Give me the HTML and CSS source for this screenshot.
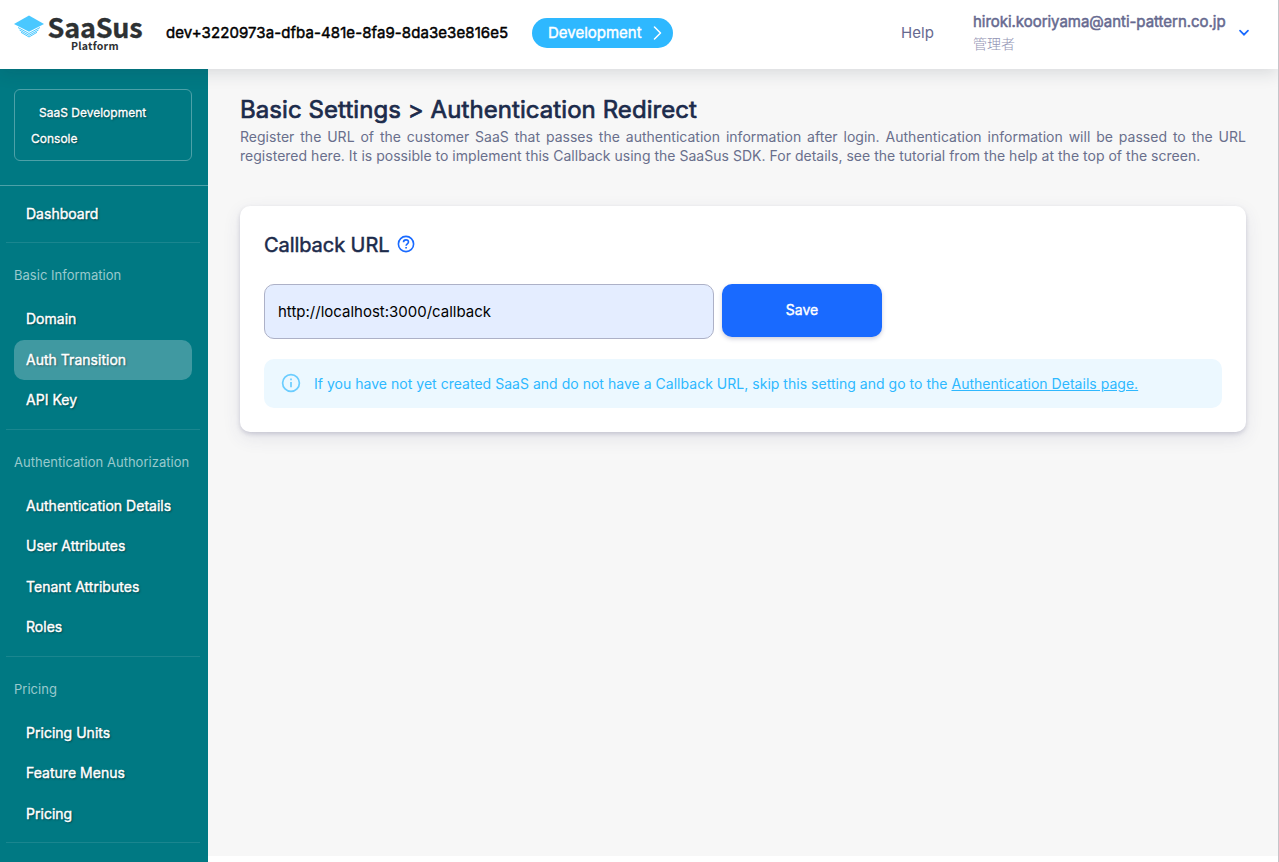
FILE: index.html
```html
<!DOCTYPE html>
<html lang="en">
<head>
<meta charset="utf-8">
<title>SaaSus Platform</title>
<link rel="stylesheet" href="styles.css">
</head>
<body>
<div class="page">
  <header class="header">
    <div class="logo">
      <svg class="logo-mark" width="30" height="24" viewBox="0 0 30 24">
        <path d="M0 9 15 .500l15 8.500-15 7.800z" fill="#4ac8ff"/>
        <path d="M4 12.500 15 18.500l11-6M5.500 15 15 20.300l9.500-5.300" fill="none" stroke="#4ac8ff" stroke-width="1"/>
        <path d="M7 17.300 15 22l8-4.700" fill="none" stroke="#4ac8ff" stroke-width="1"/>
      </svg>
      <div class="logo-text"><span class="logo-name">SaaSus</span><span class="logo-sub">Platform</span></div>
    </div>
    <div class="tenant">dev+3220973a-dfba-481e-8fa9-8da3e3e816e5</div>
    <div class="env"><span>Development</span>
      <svg width="9" height="14" viewBox="0 0 9 14"><path d="M1.500 1 7.500 7l-6 6" fill="none" stroke="#fff" stroke-width="1.500" stroke-linecap="round" stroke-linejoin="round"/></svg>
    </div>
    <div class="help">Help</div>
    <div class="user"><span class="mail">hiroki.kooriyama@anti-pattern.co.jp</span><span class="role">管理者</span></div>
    <svg class="caret" width="12" height="8" viewBox="0 0 12 8"><path d="M2 1.700 6 5.700l4-4" fill="none" stroke="#196aff" stroke-width="1.700" stroke-linecap="round"/></svg>
  </header>
  <div class="body">
    <nav class="sidebar">
      <div class="console-wrap"><div class="console">SaaS Development Console</div></div>
      <div class="group first"><a class="item">Dashboard</a></div>
      <div class="group">
        <div class="label">Basic Information</div>
        <a class="item">Domain</a>
        <a class="item active">Auth Transition</a>
        <a class="item">API Key</a>
      </div>
      <div class="group">
        <div class="label">Authentication Authorization</div>
        <a class="item">Authentication Details</a>
        <a class="item">User Attributes</a>
        <a class="item">Tenant Attributes</a>
        <a class="item">Roles</a>
      </div>
      <div class="group">
        <div class="label">Pricing</div>
        <a class="item">Pricing Units</a>
        <a class="item">Feature Menus</a>
        <a class="item">Pricing</a>
      </div>
    </nav>
    <main class="main">
      <h1 class="title">Basic Settings &gt; Authentication Redirect</h1>
      <p class="lead">Register the URL of the customer SaaS that passes the authentication information after login. Authentication information will be passed to the URL registered here. It is possible to implement this Callback using the SaaSus SDK. For details, see the tutorial from the help at the top of the screen.</p>
      <section class="card">
        <h2 class="card-title">Callback URL
          <svg class="hint" width="18" height="18" viewBox="0 0 18 18" fill="none" stroke="#196aff"><circle cx="9" cy="9" r="7.600" stroke-width="1.600"/><path d="M6.500 7.200c0-1.400 1.100-2.300 2.500-2.300s2.500.9 2.500 2.200c0 1.800-2.400 1.900-2.400 3.700" stroke-width="1.600"/><path d="M9.100 11.900v1.700" stroke-width="1.700"/></svg>
        </h2>
        <div class="form">
          <input class="field" type="text" value="http://localhost:3000/callback">
          <button class="save">Save</button>
        </div>
        <div class="notice">
          <svg class="info" width="20" height="20" viewBox="0 0 20 20" fill="none" stroke="#6bcdff"><circle cx="10" cy="10" r="8.400" stroke-width="1.700"/><path d="M10 9v5.200M10 5.500v1.700" stroke-width="1.700"/></svg>
          <span>If you have not yet created SaaS and do not have a Callback URL, skip this setting and go to the <a class="link">Authentication Details page.</a></span>
        </div>
      </section>
    </main>
  </div>
</div>
</body>
</html>
```
FILE: styles.css
```css
* { box-sizing: border-box; }
body { margin: 0; background: #fff; font-family: Inter, "Noto Sans CJK JP", sans-serif; font-size: 14px; }
.page { height: 862px; overflow: hidden; display: flex; flex-direction: column; border-right: 1px solid #c5c5ca; }

.header { position: relative; z-index: 1; height: 69px; flex: none; display: flex; align-items: center; padding: 0 28px 3px 14px; background: #fff; box-shadow: 0 4px 16px rgba(30, 40, 60, .14); }
.logo { display: flex; width: 152px; height: 38px; gap: 3.500px; }
.logo-mark { margin-top: 1px; }
.logo-text { display: flex; flex-direction: column; width: 95px; font-family: "Noto Sans CJK JP", sans-serif; color: #2d3133; font-weight: 700; }
.logo-name { font-size: 27px; line-height: 25px; letter-spacing: -.2px; -webkit-text-stroke: .3px; }
.logo-sub { font-size: 10.500px; line-height: 14px; padding-left: 23.500px; letter-spacing: .25px; }
.tenant { width: 366px; font-size: 15px; letter-spacing: .085px; color: #000; -webkit-text-stroke: .45px; padding-bottom: 1px; }
.env { display: flex; align-items: center; justify-content: space-between; width: 141px; height: 30px; padding: 0 11px 1px 16px; border-radius: 15px; background: #2eb8ff; color: #fff; font-size: 15px; -webkit-text-stroke: .4px; }
.help { margin-left: auto; width: 72px; padding-bottom: 1px; font-size: 15px; letter-spacing: .1px; color: #66698f; }
.user { display: flex; flex-direction: column; width: 265px; color: #66698f; }
.mail { font-size: 15px; line-height: 22px; letter-spacing: -.03px; -webkit-text-stroke: .5px; }
.role { font-size: 14px; line-height: 22px; color: #9294b4; font-weight: 300; }
.caret { flex: none; }

.body { flex: 1; min-height: 0; display: flex; }
.sidebar { width: 208px; flex: none; background: #007983; color: #fff; }
.console-wrap { height: 117px; padding: 20px 16px 0 14px; border-bottom: 1px solid #4da1a8; }
.console { height: 72px; padding: 10px 16px; border: 1px solid #4da1a8; border-radius: 6px; font-size: 12px; line-height: 26px; text-indent: 8px; text-shadow: 1px 1px 2px rgba(0, 0, 0, .5); -webkit-text-stroke: .3px; }
.group { margin: 0 8px 0 6px; padding: 0 8px 8.400px; border-bottom: 1px solid #1a868f; }
.group.first { padding: 8px 8px; }
.label { height: 56px; padding-top: 24px; font-size: 13px; line-height: 16px; letter-spacing: .02px; color: #99c9cd; white-space: nowrap; }
.item { display: block; height: 40px; margin-bottom: .4px; padding: 0 12px; border-radius: 10px; font-size: 14px; line-height: 40px; letter-spacing: .02px; text-shadow: 1px 1px 2px rgba(0, 0, 0, .5); -webkit-text-stroke: .4px; }
.active { background: #4099a1; }

.main { flex: 1; margin-bottom: 6px; padding: 26px 32px 0; background: #f7f7f7; }
.title { margin: 0; font-size: 24px; line-height: 30px; font-weight: 400; letter-spacing: .07px; color: #1c2b4b; -webkit-text-stroke: .7px; }
.lead { margin: 2px 0 0; height: 79px; font-size: 14px; line-height: 19px; letter-spacing: .02px; text-align: justify; color: #696f8c; }
.card { height: 226px; padding: 24px; border-radius: 10px; background: #fff; box-shadow: 0 2px 4px rgba(63, 63, 112, .2), 0 6px 18px rgba(63, 63, 112, .1); }
.card-title { display: flex; align-items: center; gap: 8px; margin: 0; height: 30px; font-size: 20px; font-weight: 400; letter-spacing: -.07px; color: #1c2b4b; -webkit-text-stroke: .5px; }
.hint { margin-bottom: 2px; }
.form { display: flex; gap: 8px; margin-top: 24px; height: 55px; }
.field { width: 450px; height: 55px; padding: 0 13px; border: 1px solid #adb1c7; border-radius: 10px; background: #e4edff; font: 15px Inter, sans-serif; color: #000; }
.save { width: 160px; height: 53px; padding: 0 0 2px; border: 0; border-radius: 10px; background: #196aff; color: #fff; font: 14px Inter, sans-serif; -webkit-text-stroke: .4px; box-shadow: 0 2px 4px rgba(63, 63, 112, .25); }
.notice { display: flex; align-items: center; gap: 13px; height: 49px; margin-top: 20px; padding: 0 17px; border-radius: 10px; background: #ecf8ff; color: #2eb8ff; font-size: 14px; letter-spacing: .025px; }
.info { margin-bottom: 2px; }
.link { text-decoration: underline; }
```
